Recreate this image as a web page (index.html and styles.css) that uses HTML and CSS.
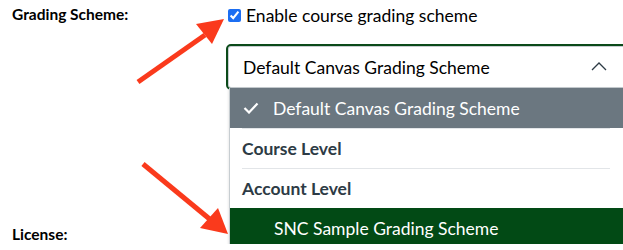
FILE: index.html
```html
<!DOCTYPE html>
<html lang="en">
<head>
    <meta charset="UTF-8">
    <meta name="viewport" content="width=device-width, initial-scale=1.0">
    <title>Course Settings</title>
    <link rel="stylesheet" href="styles.css">
</head>
<body>
  <div class="form">
    <div class="row">
      <div class="lbl">Grading Scheme:</div>
      <div class="field">
        <label class="check"><input type="checkbox" checked> Enable course grading scheme</label>
        <div class="select-wrap">
          <div class="select">
            <span>Default Canvas Grading Scheme</span>
            <svg class="chev" width="16" height="10" viewBox="0 0 16 10"><path d="M1 9 L8 2 L15 9" fill="none" stroke="#2d3b45" stroke-width="1.3"/></svg>
          </div>
          <ul class="menu">
            <li class="opt selected">
              <svg class="tick" width="16" height="12" viewBox="0 0 16 12"><path d="M1.5 6 L6 10.5 L14.5 1.5" fill="none" stroke="#fff" stroke-width="2.2"/></svg>
              Default Canvas Grading Scheme
            </li>
            <li class="group">Course Level</li>
            <li class="group">Account Level</li>
            <li class="opt active">SNC Sample Grading Scheme</li>
          </ul>
        </div>
      </div>
    </div>
    <div class="row license">
      <div class="lbl">License:</div>
      <div class="field"></div>
    </div>
  </div>

  <!-- annotation arrows -->
  <svg class="arrows" width="623" height="250" viewBox="0 0 623 250">
    <line x1="138" y1="82" x2="205" y2="35" stroke="#fa3a1c" stroke-width="5"/>
    <polygon points="224,19 196,24 212,44" fill="#fa3a1c"/>
    <line x1="143" y1="164" x2="212" y2="221" stroke="#fa3a1c" stroke-width="5"/>
    <polygon points="228,234 218,208 200,228" fill="#fa3a1c"/>
  </svg>
</body>
</html>
```

FILE: styles.css
```css
* {margin: 0; padding: 0; box-sizing: border-box;}
body {font-family: Lato, "Noto Sans", sans-serif; color: #2d3b45; background: #fff; overflow: hidden;}
.form {padding-left: 12px;}
.row {display: grid; grid-template-columns: 214px 1fr;}
.lbl {font-size: 15.5px; font-weight: bold; line-height: 20px; padding-top: 4px; color: #000;}
.field {min-width: 0;}

.check {display: flex; align-items: center; gap: 5px; height: 30px; font-size: 17.5px; color: #000; padding-left: 2px;}
.check input {width: 13px; height: 13px; margin: 0; accent-color: #1c6ef2;}

.select-wrap {position: relative; margin-top: 14px; margin-right: -20px;}
.select {
    height: 46px;
    border: 2px solid #0b4a1a;
    border-radius: 5px;
    box-shadow: inset 0 0 0 1px #c7cdd1;
    display: flex;
    align-items: center;
    justify-content: space-between;
    padding: 0 34px 0 15px;
    font-size: 17.5px;
    color: #000;
}
.chev {margin-top: -2px;}

.menu {
    position: absolute;
    top: 44px;
    left: 3px;
    right: 0;
    list-style: none;
    background: #fff;
    border-left: 1px solid #c7cdd1;
    box-shadow: -1px 0 2px rgba(0,0,0,0.08);
    z-index: 10;
}
.menu li {height: 40px; display: flex; align-items: center; font-size: 17.5px;}
.opt {padding-left: 44px;}
.selected {background: #6b7780; color: #fff; height: 41px; padding-left: 13px; gap: 14px;}
.tick {flex: none;}
.group {font-weight: bold; margin: 0 33px 0 12px; border-top: 1px solid #e2e5e8; color: #2d3b45;}
.active {background: #024a15; color: #fff;}

.license {margin-top: 130px;}

.arrows {position: absolute; top: 0; left: 0; pointer-events: none; z-index: 20;}
```
